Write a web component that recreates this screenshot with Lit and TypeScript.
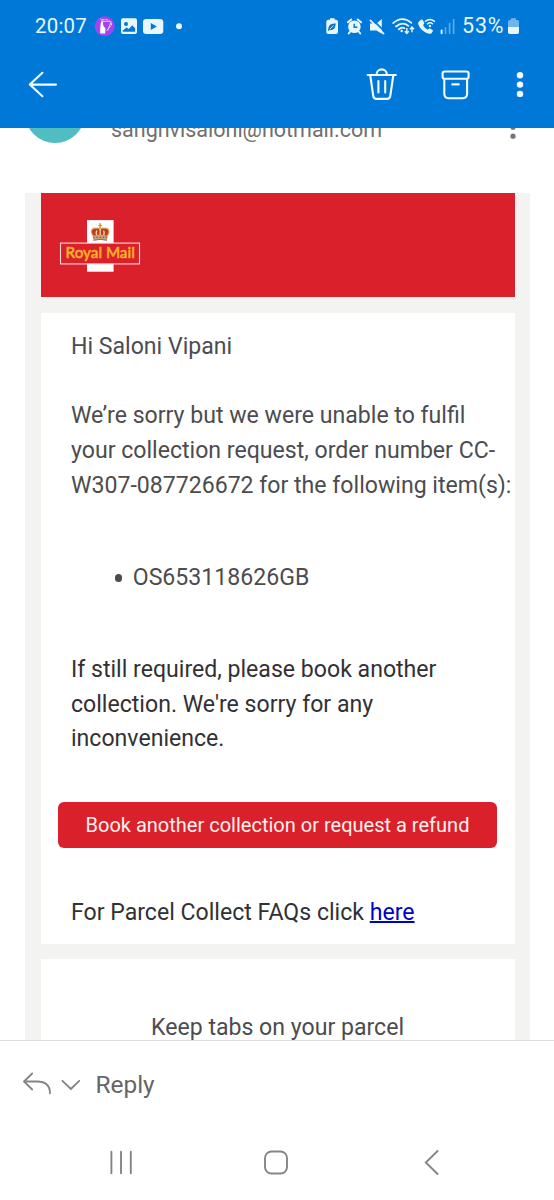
import { LitElement, html, css, svg } from "lit";
import { customElement } from "lit/decorators.js";

@customElement("status-bar")
class StatusBar extends LitElement {
  static styles = css`
    :host { display: flex; height: 52px; align-items: center; padding: 0 34px 0 35px; justify-content: space-between; color: #e9f7fd; font: 20.4px/24px Roboto, sans-serif; }
    .group { display: flex; align-items: center; }
    .time { width: 57px; letter-spacing: 0.25px; white-space: nowrap; }
    .level { width: 46px; font-size: 21.4px; letter-spacing: 0.9px; white-space: nowrap; }
    svg { display: block; }
  `;
  render() {
    return html`
      <div class="group">
        <span class="time">20:07</span>
        <svg width="94" height="26" viewBox="92 13 94 26">
          <circle cx="104.7" cy="26.3" r="10" fill="#a443f0" />
          <path d="M100.2 18.6L103.2 21.4H109.6M111.2 21.3L107.8 30.4" fill="none" stroke="#fff" stroke-width=".7" />
          <path d="M101 21.6H103L103.2 25.4L105.4 28.6L105.2 33.6H100.2V28.6Z" fill="#fff" />
          <path d="M102 20C107 18.6 111.2 20.6 111.6 25L106.6 30.6" fill="none" stroke="#f1d5ff" stroke-width="1" stroke-dasharray="2.5 1" />
          <path fill-rule="evenodd" fill="#e9f7fd" d="M123 18.3H135Q137 18.3 137 20.3V32Q137 34 135 34H123Q121 34 121 32V20.3Q121 18.3 123 18.3ZM126 22A2 2 0 1 0 126 26A2 2 0 1 0 126 22ZM122.8 31.8H135.2V28.2L132.2 25.2L128.8 29L126.6 27.4L122.8 30.6Z" />
          <path fill-rule="evenodd" fill="#e9f7fd" d="M146.3 19H160Q163.3 19 163.3 22.3V30.7Q163.3 34 160 34H146.3Q143 34 143 30.7V22.3Q143 19 146.3 19ZM150.8 23V30L156.8 26.5Z" />
          <circle cx="179" cy="26.2" r="3" fill="#e9f7fd" />
        </svg>
      </div>
      <div class="group">
        <svg width="136" height="26" viewBox="326 13 136 26">
          <path fill="#e9f7fd" fill-rule="evenodd" d="M330 18.2H334.6V19.8H336Q338 19.8 338 21.8V32Q338 34 336 34H328.3Q326.3 34 326.3 32V21.8Q326.3 19.8 328.3 19.8H330ZM335.7 23.4C331.5 23.4 328.6 24.6 328.4 28.6L327.8 30.8H329.2L329.6 29.8C333.8 30.6 335.5 27.6 335.7 23.4Z" />
          <path d="M330 29L333.5 25.6" stroke="#e9f7fd" stroke-width=".8" />
          <g fill="none" stroke="#e9f7fd">
            <circle cx="354.4" cy="26.8" r="5.2" fill="#e9f7fd" stroke-width="2.2" />
            <path d="M347.9 22.3L351.2 19.5M361 22.3L357.7 19.5M350.2 31.5L348.7 33.5M358.7 31.5L360.2 33.5" stroke-width="2" stroke-linecap="round" />
            <path d="M354.2 23.8V27.3H357.4" stroke="#0078d7" stroke-width="1.4" />
          </g>
          <path fill="#e9f7fd" d="M370 23.5H373.8L375 24.8L381.8 19V33.8L376.5 30.5H370Z" />
          <path d="M371.4 18.6L386 32.6" stroke="#0078d7" stroke-width="1.6" />
          <path d="M370.4 20.4L383.6 33.6" stroke="#e9f7fd" stroke-width="1.6" stroke-linecap="round" />
          <g fill="none" stroke="#e9f7fd" stroke-width="1.7" stroke-linecap="round">
            <path d="M393.2 23.2Q402 15.4 411.4 22.8" />
            <path d="M396 26.5Q402.2 20.9 408.5 25.8" />
            <path d="M398.7 29.4Q401.6 26.5 404.4 28.2" />
          </g>
          <circle cx="401.7" cy="31" r="1.2" fill="#e9f7fd" />
          <g fill="none" stroke="#e9f7fd" stroke-width="1.4">
            <path d="M406.8 28V33.4M404.8 31.2L406.8 33.4L408.8 31.2M412 32.2V27.2M410 29.3L412 27.1L414 29.3" />
          </g>
          <path fill="#e9f7fd" d="M419.2 21.2L421.4 19.6Q422.2 19.2 422.7 20L424.2 22.8Q424.6 23.6 423.9 24.2L422.9 25.1Q424.5 28.2 427.7 29.7L428.8 28.7Q429.4 28.2 430.1 28.6L432.5 30Q433.2 30.6 432.8 31.3L431.4 33.2Q430.6 34 429.3 33.8C423.5 32.6 418.8 27.5 418.1 23.2Q418 22 419.2 21.2Z" />
          <g fill="none" stroke="#e9f7fd" stroke-width="1.4" stroke-linecap="round">
            <path d="M425.4 21.3Q429.9 17.5 434.5 21.4M427.4 23.9Q430 21.8 432.6 23.8" />
          </g>
          <circle cx="429.9" cy="26" r="1.2" fill="#e9f7fd" />
          <path d="M441.6 30.5V33.3" stroke="#e9f7fd" stroke-width="1.9" stroke-linecap="round" />
          <path d="M445.5 27.8V33.2M449.6 23.7V33.2M453.6 19.5V33.2" stroke="#5babe7" stroke-width="1.7" stroke-linecap="round" />
        </svg>
        <span class="level">53%</span>
        <svg width="12" height="26" viewBox="508 13 12 26">
          <path fill="#70b5e9" d="M510.8 18.2H516V20H517.3Q519 20 519 21.7V27H508V21.7Q508 20 509.7 20H510.8Z" />
          <path fill="#e9f7fd" d="M508 27H519V32.2Q519 34 517.2 34H509.8Q508 34 508 32.2Z" />
        </svg>
      </div>
    `;
  }
}

@customElement("mail-toolbar")
class MailToolbar extends LitElement {
  static styles = css`
    :host { display: flex; height: 75px; padding: 0 26px; align-items: flex-start; }
    svg { display: block; flex: none; }
    .spacer { flex: 1; }
    .actions { display: flex; }
    .trash { margin-right: 41px; }
    .archive { margin-right: 40.5px; }
  `;
  render() {
    return html`
      <svg width="34" height="66" viewBox="26 52 34 66" fill="none" stroke="#f4fbff" stroke-width="2.1" stroke-linecap="round" stroke-linejoin="round">
        <path d="M56 84.6H29.8M42.4 72.8L29.8 84.6L42.4 96.2" />
      </svg>
      <div class="spacer"></div>
      <div class="actions">
        <svg class="trash" width="34" height="66" viewBox="365 52 34 66" fill="none" stroke="#f4fbff" stroke-width="2.1" stroke-linecap="round" stroke-linejoin="round">
          <path d="M367.7 75H395.8M376.6 74.5C376.6 67.7 386.8 67.7 386.8 74.5M370.3 75.5L373.3 96.3Q373.8 98.9 376.4 98.9H387.1Q389.7 98.9 390.2 96.3L393.3 75.5M378.4 81V92.4M385.2 81V92.4" />
        </svg>
        <svg class="archive" width="32" height="66" viewBox="440 52 32 66" fill="none" stroke="#f4fbff" stroke-width="2.1" stroke-linecap="round" stroke-linejoin="round">
          <rect x="442.6" y="71.5" width="26" height="7.2" rx="2" />
          <path d="M444.3 79V93.8Q444.3 98.2 448.7 98.2H462.7Q467.1 98.2 467.1 93.8V79M452.3 84.4H458.7" />
        </svg>
        <svg width="16" height="66" viewBox="512 52 16 66" fill="#f4fbff">
          <circle cx="520" cy="75.3" r="3.2" /><circle cx="520" cy="84.6" r="3.2" /><circle cx="520" cy="93.9" r="3.2" />
        </svg>
      </div>
    `;
  }
}

@customElement("royal-mail-logo")
class RoyalMailLogo extends LitElement {
  static styles = css`
    :host { display: block; }
    svg { display: block; }
    .word { font: 500 15px Lato, sans-serif; fill: #fcb02c; stroke: #fcb02c; stroke-width: 0.5; stroke-linejoin: round; }
  `;
  render() {
    const jewels = [94, 97, 100.2, 103.4, 106.4];
    return html`
      <svg width="82" height="54" viewBox="59 218.5 82 54">
        <rect x="87" y="219.6" width="26.6" height="51.6" fill="#fff" />
        <rect x="60.5" y="242.6" width="79" height="20.8" fill="#da202a" stroke="#ffd9d9" stroke-width="1.1" />
        <path d="M99.4 222.8H101V224.4H102.2V225.6H101V228H99.4V225.6H98.2V224.4H99.4Z" fill="#c99a3a" />
        <path d="M93.8 236C89 230.8 92.4 226.8 96.2 227.8Q98.8 227 100.2 229Q101.6 227 104.2 227.8C108 226.8 111.4 230.8 106.6 236Z" fill="#c9352c" stroke="#d3a850" stroke-width="1.1" />
        <path d="M96.8 230Q95.4 232.6 97 235.6M103.6 230Q105 232.6 103.4 235.6" fill="none" stroke="#f3d796" stroke-width="1.5" />
        <path d="M100.2 228.5V236" stroke="#f3d796" stroke-width="1.3" />
        <path d="M92.8 235.2Q100.2 233.4 107.6 235.2L107 239.8Q100.2 238.2 93.4 239.8Z" fill="#c4a877" />
        ${jewels.map((x) => svg`<circle cx=${x} cy="236.8" r=".85" fill="#d8483b" />`)}
        <path d="M93.4 239.8Q100.2 238 107 239.8" fill="none" stroke="#77706a" stroke-width="1" />
        <text class="word" x="65.6" y="257.2" textLength="69.2" lengthAdjust="spacingAndGlyphs">Royal Mail</text>
      </svg>
    `;
  }
}

@customElement("mail-message")
class MailMessage extends LitElement {
  static styles = css`
    :host { display: block; flex: 1; min-height: 0; overflow: hidden; background: #fff; font: 23.1px/34.65px Roboto, sans-serif; color: #4c4c50; }
    .sender { display: flex; height: 65.2px; }
    .avatar { flex: none; width: 60px; height: 60px; border-radius: 50%; background: #50bdc2; margin: -44.5px 0 0 25px; }
    .address { flex: 1; margin: -14px 0 0 26px; font-size: 21.5px; line-height: 32px; color: #707070; letter-spacing: 0; }
    .more { flex: none; margin-right: 33px; }
    .more svg { display: block; }
    .frame { margin: 0 24.3px 0 25.2px; padding: 0 15.2px 0 15.4px; background: #f3f3f2; display: flex; flex-direction: column; gap: 15.4px; }
    .banner { height: 104.7px; background: #da202a; padding: 26.3px 0 0 18.6px; box-sizing: border-box; }
    .card { background: #fff; white-space: nowrap; }
    .notice { height: 631px; box-sizing: border-box; padding: 17.2px 0 0 30.4px; }
    p { margin: 0 0 34.65px; }
    ul { margin: 57.8px 0 57.5px; padding: 0 0 0 43.8px; list-style: none; }
    li { display: flex; align-items: center; gap: 10.4px; }
    li::before { content: ""; width: 7.6px; height: 7.6px; border-radius: 50%; background: currentColor; margin-bottom: 0.6px; }
    .dark { color: #313135; }
    .button { display: block; width: 439px; height: 46px; margin: 44.7px 0 48.4px -13px; border-radius: 6px; background: #da202a; color: #fff0ee; font-size: 20.03px; line-height: 46px; text-align: center; }
    a { color: #0000c8; text-decoration-thickness: 2px; }
    .tabs { padding: 52px 0 30px; text-align: center; }
    .tabs p { margin: 0; }
  `;
  render() {
    return html`
      <div class="sender">
        <div class="avatar"></div>
        <div class="address">sanghvisaloni@hotmail.com</div>
        <div class="more"><svg width="16" height="20" viewBox="505 127 16 20" fill="#757575"><circle cx="513" cy="126.3" r="2.6" /><circle cx="513" cy="135.2" r="2.6" /></svg></div>
      </div>
      <div class="frame">
        <div class="banner"><royal-mail-logo></royal-mail-logo></div>
        <div class="card notice">
          <p>Hi Saloni Vipani</p>
          <p>We’re sorry but we were unable to fulfil<br />your collection request, order number CC-<br />W307-087726672 for the following item(s):</p>
          <ul><li>OS653118626GB</li></ul>
          <p class="dark">If still required, please book another<br />collection. We're sorry for any<br />inconvenience.</p>
          <div class="button">Book another collection or request a refund</div>
          <p class="dark">For Parcel Collect FAQs click <a href="#">here</a></p>
        </div>
        <div class="card tabs"><p>Keep tabs on your parcel</p></div>
      </div>
    `;
  }
}

@customElement("reply-bar")
class ReplyBar extends LitElement {
  static styles = css`
    :host { display: flex; height: 85px; align-items: center; border-top: 1px solid #dedede; background: #fff; box-sizing: border-box; padding: 0 0 0 20px; color: #666; font: 24.4px/32px Roboto, sans-serif; gap: 13.5px; }
    svg { display: block; }
    .label { padding-top: 4px; }
  `;
  render() {
    return html`
      <svg width="62" height="40" viewBox="20 1063 62 40" fill="none" stroke="#858585" stroke-width="1.8" stroke-linecap="round" stroke-linejoin="round">
        <path d="M32.2 1073.5L24 1081.5L32.2 1089.5M24.2 1081.5H37Q50 1081.5 50 1093.3M62.4 1080.8L70.9 1089L79.2 1080.8" />
      </svg>
      <span class="label">Reply</span>
    `;
  }
}

@customElement("system-nav")
class SystemNav extends LitElement {
  static styles = css`
    :host { display: flex; height: 75px; background: #fff; align-items: center; justify-content: space-between; padding: 0 110px 0 106px; }
    svg { display: block; }
  `;
  render() {
    return html`
      <svg width="30" height="30" viewBox="106 1148 30 30" stroke="#858585" stroke-width="1.9" stroke-linecap="round"><path d="M111.4 1151.8V1173.2M121 1151.8V1173.2M130.8 1151.8V1173.2" /></svg>
      <svg width="30" height="30" viewBox="260 1148 30 30" fill="none" stroke="#858585" stroke-width="1.9"><rect x="265" y="1151.5" width="22" height="22" rx="6.5" /></svg>
      <svg width="30" height="30" viewBox="414 1148 30 30" fill="none" stroke="#858585" stroke-width="1.9" stroke-linecap="round"><path d="M437.6 1151L425.8 1162.5L437.6 1174" /></svg>
    `;
  }
}

@customElement("app-root")
class AppRoot extends LitElement {
  static styles = css`
    :host { display: flex; flex-direction: column; height: 1200px; width: 554px; overflow: hidden; background: #fff; }
    .top { background: #0078d7; height: 127.5px; flex: none; }
    reply-bar, system-nav { flex: none; }
  `;
  render() {
    return html`
      <div class="top"><status-bar></status-bar><mail-toolbar></mail-toolbar></div>
      <mail-message></mail-message>
      <reply-bar></reply-bar>
      <system-nav></system-nav>
    `;
  }
}
